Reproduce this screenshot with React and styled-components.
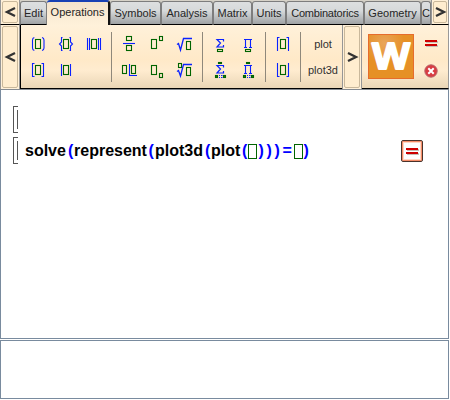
import React from "react";
import styled, { createGlobalStyle, css } from "styled-components";

const Global = createGlobalStyle`
  * { box-sizing: border-box; }
  body { margin: 0; background: #fff; font-family: "Liberation Sans", Arial, sans-serif; }
`;

const Window = styled.div`
  width: 450px;
  height: 400px;
  display: flex;
  flex-direction: column;
  overflow: hidden;
`;

const TabBar = styled.div`
  display: flex;
  width: 449px;
  height: 25px;
  background: #d6d2c8;
`;

const TabStrip = styled.div`
  display: flex;
  width: 411px;
`;

const Tab = styled.div`
  flex: none;
  width: ${(p) => p.$width}px;
  height: 24px;
  margin-top: 1px;
  padding-top: 5px;
  border: 1px solid #7d7d7d;
  border-bottom-color: #000;
  border-radius: 3px 3px 0 0;
  background: linear-gradient(#dddfe0, #d6d9da 40%, #9fa2a4);
  color: #252525;
  font-size: 11px;
  line-height: 12px;
  text-align: center;
  white-space: nowrap;
  letter-spacing: ${(p) => p.$tracking || 0}px;
  ${(p) =>
    p.$active &&
    css`
      height: 25px;
      margin-top: 0;
      padding-top: 4px;
      border: 0;
      border-top: 2px solid #1740b4;
      border-right: 2px solid #111;
      background: linear-gradient(#f3e3cc, #fff1da);
    `}
`;

const ScrollButton = styled.div`
  flex: none;
  display: flex;
  width: ${(p) => p.$width}px;
  height: ${(p) => p.$height}px;
  border: 1px solid #969696;
  border-width: 0 1px 0 1px;
  border-bottom: ${(p) => (p.$underline ? "1px solid #000" : "0")};
  padding: 1px;
  background: #fff0d8;
`;

const ScrollFace = styled.div`
  display: flex;
  align-items: center;
  justify-content: center;
  width: 100%;
  height: 100%;
  border: 1px solid #c9b89b;
  border-radius: 2px;
  background: #ffedcf;
`;

const Ribbon = styled.div`
  display: flex;
  width: 449px;
  height: 65px;
  border-bottom: 1px solid #858b92;
  background: #ffedce;
`;

const Tools = styled.div`
  display: flex;
  width: 322px;
  height: 64px;
  padding: 6px 0 0 3px;
  border-left: 1px solid #000;
  border-bottom: 1px solid #000;
  background: linear-gradient(#fff1da, #ffe9c8 55%, #ffecd0 72%, #ead6b6);
`;

const Group = styled.div`
  display: grid;
  grid-template-columns: repeat(${(p) => p.$columns}, 28px);
  grid-template-rows: 26px 26px;
  flex: none;
`;

const Divider = styled.div`
  flex: none;
  width: 1px;
  height: 50px;
  margin: 1px 3px 0;
  background: #8f887b;
`;

const PlotGroup = styled.div`
  display: grid;
  grid-template-rows: 26px 26px;
  width: 38px;
  font-size: 11px;
  line-height: 26px;
  text-align: center;
  color: #303030;
`;

const Actions = styled.div`
  display: flex;
  width: 87px;
  height: 64px;
  padding: 9px 0 0 6px;
  border-bottom: 1px solid #000;
  border-right: 1px solid #999;
  background: linear-gradient(#fff1da, #ffe9c8 55%, #ffecd0 72%, #ead6b6);
`;

const ActionList = styled.div`
  display: flex;
  flex-direction: column;
  align-items: center;
  gap: 17px;
  padding: 6px 0 0 10px;
`;

const Sheet = styled.div`
  height: ${(p) => p.$height}px;
  width: 449px;
  border: 1px solid #798b9e;
  border-top-width: ${(p) => (p.$open ? 0 : 1)}px;
  background: #fff;
  margin-bottom: 1px;
  padding-top: ${(p) => (p.$open ? 16 : 0)}px;
`;

const Cell = styled.div`
  display: flex;
  height: 27px;
  margin: 0 0 4px 12px;
`;

const CellMarker = styled.div`
  width: 5px;
  height: 27px;
  border: 1px solid #555;
  border-right: 0;
  padding: 3px 0 3px 3px;
`;

const MarkerInner = styled.div`
  width: 1px;
  height: 19px;
  background: #555;
`;

const Formula = styled.div`
  display: flex;
  flex: none;
  width: 383px;
  padding: 5px 0 0 7px;
  font-size: 16px;
  line-height: 18px;
  font-weight: bold;
  white-space: nowrap;
`;

const Token = styled.span`
  width: ${(p) => p.$width}px;
  flex: none;
  color: ${(p) => (p.$operator ? "#0000ff" : "#000")};
`;

const Placeholder = styled.span`
  flex: none;
  width: 9px;
  height: 15px;
  margin: 2px ${(p) => p.$after}px 0 0;
  border: 1px solid #006400;
`;

const Evaluate = styled.div`
  display: flex;
  flex: none;
  align-items: center;
  justify-content: center;
  width: 22px;
  height: 22px;
  margin-top: 3px;
  border: 1px solid #4a332b;
  border-radius: 2px;
  background: #fff;
  box-shadow: inset 0 0 0 1px #f58c68, inset 0 0 0 2px #ffd8c5;
`;

const Icon = styled.svg`
  display: block;
  width: 28px;
  height: 26px;
  fill: none;
  stroke: #0a22ff;
  stroke-width: 1.1;
`;

const Graphic = styled.svg`
  display: block;
  flex: none;
  overflow: visible;
`;

const LogoLetter = styled.text`
  font: 700 35px "Open Sans", sans-serif;
  fill: #fff;
  stroke: #fff;
  stroke-width: 1.8px;
  stroke-linejoin: round;
`;

const Box = ({ x = 11.5, y = 8.5, w = 5, h = 9 }) => (
  <rect x={x} y={y} width={w} height={h} stroke="#006400" />
);

function Range() {
  return (
    <>
      <Box x={9.5} y={18.5} w={2} h={2} />
      <Box x={17.5} y={18.5} w={2} h={2} />
      <path d="M13 18.5h1M13 20.5h1M15 18.5h1.5M15 20.5h1.5" />
    </>
  );
}

const Sigma = () => <path strokeWidth="1.2" d="M17.5 10.5V8.5h-6.5l3.5 3.5-3.5 4h6.5V14" />;
const Pi = () => <path d="M10 8.5h8M11.5 8.5v8M16.5 8.5v8M10 16.5h3M15 16.5h3" />;

const icons = {
  paren: <><path d="M10.3 6.5Q8.5 7 8.5 9v8Q8.5 19 10.3 19.5M18 6.5Q20 7 20 9v8Q20 19 18 19.5" /><Box /></>,
  brace: <><path d="M10.5 6.5H9.5V11L7.5 13l2 2v4.5h1M17.5 6.5h1V11l2 2-2 2v4.5h-1" /><Box /></>,
  norm: <><path d="M7.5 7v12M9.5 7v12M18.5 7v12M20.5 7v12" /><Box /></>,
  bracket: <><path d="M10.5 6.5h-2v13h2M17.5 6.5h2v13h-2" /><Box /></>,
  abs: <><path d="M9.5 7v12M18.5 7v12" /><Box /></>,
  fraction: <><path d="M8 12.5h12" /><Box y={5.5} h={4} /><Box y={14.5} h={5} /></>,
  division: <><path d="M14.5 7v11.5H22" /><Box x={7.5} w={4} y={8.5} h={8} /><Box x={16.5} w={4} y={8.5} h={8} /></>,
  power: <><Box x={8.5} /><Box x={16.5} y={5.5} w={3} h={4} /></>,
  index: <><Box x={8.5} /><Box x={16.5} y={16.5} w={3} h={4} /></>,
  root: <><path strokeWidth="1.3" d="M6 13.5l1.5-1 2 6.5 3-11.5H21" /><Box x={15.5} y={10.5} w={4} h={8} /></>,
  nroot: <><path strokeWidth="1.3" d="M6 14.5l1.5-1 2 5.5 3-11.5H21" /><Box x={7.5} y={6.5} w={3} h={4} /><Box x={15.5} y={10.5} w={4} h={8} /></>,
  sum: <><Sigma /><Box y={18.5} h={2} /></>,
  product: <><Pi /><Box y={18.5} h={2} /></>,
  sumRange: <><Sigma /><Box x={12.5} y={5.5} w={3} h={1} /><Range /></>,
  productRange: <><Pi /><Box x={12.5} y={5.5} w={3} h={1} /><Range /></>,
  ceil: <><path d="M10.5 6.5h-2V20M17.5 6.5h2V20" /><Box /></>,
  floor: <><path d="M8.5 6v13.5h2M19.5 6v13.5h-2" /><Box /></>,
};

const groups = [
  { columns: 3, names: ["paren", "brace", "norm", "bracket", "abs", null] },
  { columns: 3, names: ["fraction", "power", "root", "division", "index", "nroot"] },
  { columns: 2, names: ["sum", "product", "sumRange", "productRange"] },
  { columns: 1, names: ["ceil", "floor"] },
];

const Chevron = ({ right }) => (
  <Graphic width="11" height="12" viewBox="0 0 11 12">
    <path d={right ? "M1 2l8 4-8 4" : "M10 2L2 6l8 4"} fill="none" stroke="#333" strokeWidth="2.3" />
  </Graphic>
);

const Scroll = ({ right, width, height, underline }) => (
  <ScrollButton $width={width} $height={height} $underline={underline}>
    <ScrollFace><Chevron right={right} /></ScrollFace>
  </ScrollButton>
);

const EqualsIcon = () => (
  <Graphic width="13" height="7" viewBox="0 0 13 7" shapeRendering="crispEdges">
    <path d="M1 1h12v2H1zM1 5h12v2H1z" fill="#c6c0b8" />
    <path d="M0 0h12v2H0zM0 4h12v2H0z" fill="#ce0000" />
  </Graphic>
);

const Logo = () => (
  <Graphic width="46" height="45" viewBox="0 0 46 45">
    <defs>
      <radialGradient id="logoGlow" cx=".35" cy=".2" r=".45">
        <stop stopColor="#e9a55b" />
        <stop offset="1" stopColor="#e69026" />
      </radialGradient>
    </defs>
    <rect x=".5" y=".5" width="45" height="44" fill="url(#logoGlow)" stroke="#e66c2c" />
    <LogoLetter x="4" y="35" textLength="38" lengthAdjust="spacingAndGlyphs">W</LogoLetter>
  </Graphic>
);

const CloseIcon = () => (
  <Graphic width="14" height="14" viewBox="0 0 14 14">
    <circle cx="7" cy="7" r="6.2" fill="#d83b42" stroke="#b86569" />
    <path d="M4.3 4.3l5.4 5.4M9.7 4.3L4.3 9.7" stroke="#fff" strokeWidth="2" />
  </Graphic>
);

const tabs = [
  ["Edit", 27],
  ["Operations", 63],
  ["Symbols", 51],
  ["Analysis", 52],
  ["Matrix", 39],
  ["Units", 34],
  ["Combinatorics", 78, -0.2],
  ["Geometry", 57],
  ["C", 10],
];

const tokens = [
  ["solve", 43], ["(", 6], ["represent", 74.5], ["(", 6.5],
  ["plot3d", 50], ["(", 6], ["plot", 31], ["(", 6], ["box", 1.5],
  [")", 8], [")", 8], [")", 8], ["=", 11.5], ["box", 0.5], [")", 6],
];

export default function App() {
  return (
    <Window>
      <Global />
      <TabBar>
        <Scroll width={20} height={25} underline />
        <TabStrip>
          {tabs.map(([label, width, tracking]) => (
            <Tab key={label} $width={width} $tracking={tracking} $active={label === "Operations"}>{label}</Tab>
          ))}
        </TabStrip>
        <Scroll right width={18} height={25} underline />
      </TabBar>
      <Ribbon>
        <Scroll width={20} height={64} />
        <Tools>
          {groups.map((group) => (
            <React.Fragment key={group.names[0]}>
              <Group $columns={group.columns}>
                {group.names.map((name, i) => <Icon key={i} viewBox="0 0 28 26">{icons[name]}</Icon>)}
              </Group>
              <Divider />
            </React.Fragment>
          ))}
          <PlotGroup><span>plot</span><span>plot3d</span></PlotGroup>
        </Tools>
        <Scroll right width={20} height={64} />
        <Actions>
          <Logo />
          <ActionList><EqualsIcon /><CloseIcon /></ActionList>
        </Actions>
      </Ribbon>
      <Sheet $open $height={249}>
        <Cell><CellMarker><MarkerInner /></CellMarker></Cell>
        <Cell>
          <CellMarker><MarkerInner /></CellMarker>
          <Formula>
            {tokens.map(([text, width], i) =>
              text === "box" ? (
                <Placeholder key={i} $after={width} />
              ) : (
                <Token key={i} $width={width} $operator={"()=".includes(text)}>{text}</Token>
              )
            )}
          </Formula>
          <Evaluate><EqualsIcon /></Evaluate>
        </Cell>
      </Sheet>
      <Sheet $height={59} />
    </Window>
  );
}
